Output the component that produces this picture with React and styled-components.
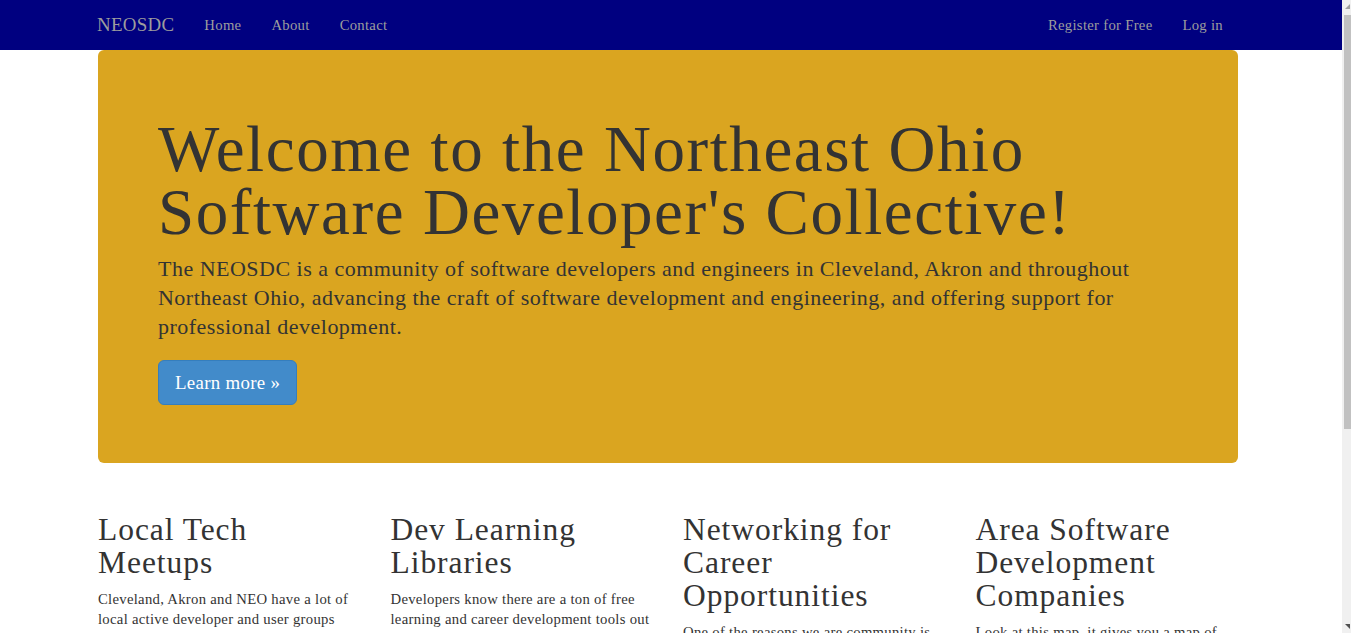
import React from "react";
import styled, { createGlobalStyle } from "styled-components";

const Global = createGlobalStyle`
  html, body { margin: 0; padding: 0; }
  body {
    font-family: "Palatino Linotype", "Book Antiqua", Palatino, "Liberation Serif", serif;
    font-size: 14.7px;
    letter-spacing: 0.02em;
    line-height: 20px;
    color: #333;
    background: #fff;
  }
  * { box-sizing: border-box; }
`;

const Container = styled.div`
  width: 1170px;
  margin: 0 auto;
  padding: 0 15px;
`;

const NavBar = styled.nav`
  background: #000080;
  height: 50px;
  padding-right: 15px;
`;

const Main = styled.main`
  padding-right: 15px;
`;

const NavInner = styled(Container)`
  display: flex;
  align-items: stretch;
  height: 50px;
`;

const Brand = styled.a`
  display: flex;
  align-items: center;
  font-size: 18.9px;
  color: #9d9d9d;
  text-decoration: none;
  margin-left: -1px;
  padding-right: 15px;
`;

const NavList = styled.ul`
  display: flex;
  list-style: none;
  margin: 0;
  padding: 0;
  margin-left: ${(p) => (p.$right ? "auto" : "0")};
`;

const NavLink = styled.a`
  display: flex;
  align-items: center;
  height: 50px;
  padding: 0 15px;
  color: #9d9d9d;
  text-decoration: none;
  font-size: 14.7px;
`;

const Jumbotron = styled.div`
  background: #daa520;
  border-radius: 6px;
  padding: 0 60px 58px;
  margin-bottom: 30px;
  overflow: hidden;
`;

const Title = styled.h1`
  font-size: 65px;
  line-height: 63px;
  font-weight: 400;
  letter-spacing: 0.024em;
  color: #333;
  margin: 68px 0 10px;
`;

const Lead = styled.p`
  font-size: 22px;
  line-height: 29px;
  letter-spacing: 0.022em;
  color: #333;
  margin: 0;
`;

const PrimaryButton = styled.a`
  display: inline-flex;
  align-items: center;
  height: 45px;
  margin-top: 19px;
  padding: 0 16px;
  font-size: 18.9px;
  color: #fff;
  background: #428bca;
  border: 1px solid #357ebd;
  border-radius: 6px;
  text-decoration: none;
`;

const Row = styled.div`
  display: grid;
  grid-template-columns: repeat(4, 1fr);
  margin: 0 -15px;
`;

const Col = styled.div`
  padding: 0 15px;
`;

const ColTitle = styled.h2`
  font-size: 31.5px;
  line-height: 33px;
  font-weight: 400;
  letter-spacing: 0.03em;
  color: #333;
  margin: 20px 0 10px;
`;

const ColText = styled.p`
  margin: 0 0 10px;
`;

const DefaultButton = styled.a`
  display: inline-block;
  padding: 6px 12px;
  border: 1px solid #ccc;
  border-radius: 4px;
  color: #333;
  text-decoration: none;
  background: #fff;
`;

const Footer = styled.footer`
  border-top: 1px solid #eee;
  margin-top: 30px;
  padding: 20px 0 40px;
`;

/* window scrollbar seen at the right edge of the screenshot */
const ScrollTrack = styled.div`
  position: fixed;
  top: 0;
  right: 0;
  width: 9px;
  height: 100vh;
  background: #f0f0f0;
  display: flex;
  flex-direction: column;
  align-items: flex-end;
`;

const ScrollArrow = styled.div`
  width: 0;
  height: 0;
  margin: ${(p) => (p.$down ? "auto 1px 4px 0" : "4px 1px 6px 0")};
  border-left: 5px solid transparent;
  ${(p) => (p.$down ? "border-top: 5px solid #505050;" : "border-bottom: 5px solid #a0a0a0;")}
`;

const ScrollThumb = styled.div`
  width: 7px;
  height: 414px;
  background: #c1c1c1;
`;

const cols = [
  {
    title: "Local Tech Meetups",
    text:
      "Cleveland, Akron and NEO have a lot of local active developer and user groups that meet regularly to share ideas, give talks and learn about new technologies. Find one near you.",
  },
  {
    title: "Dev Learning Libraries",
    text:
      "Developers know there are a ton of free learning and career development tools out there. We collect the best of them in one place so you can spend your time learning.",
  },
  {
    title: "Networking for Career Opportunities",
    text:
      "One of the reasons we are community is to help each other find great work with great people right here in Northeast Ohio.",
  },
  {
    title: "Area Software Development Companies",
    text:
      "Look at this map, it gives you a map of the software development companies located throughout the region.",
  },
];

export default function App() {
  return (
    <>
      <Global />
      <NavBar>
        <NavInner>
          <Brand href="#">NEOSDC</Brand>
          <NavList>
            <li><NavLink href="#">Home</NavLink></li>
            <li><NavLink href="#">About</NavLink></li>
            <li><NavLink href="#">Contact</NavLink></li>
          </NavList>
          <NavList $right>
            <li><NavLink href="#">Register for Free</NavLink></li>
            <li><NavLink href="#">Log in</NavLink></li>
          </NavList>
        </NavInner>
      </NavBar>
      <Main>
        <Container>
          <Jumbotron>
            <Title>Welcome to the Northeast Ohio Software Developer's Collective!</Title>
            <Lead>
              The NEOSDC is a community of software developers and engineers in Cleveland, Akron and
              throughout Northeast Ohio, advancing the craft of software development and engineering,
              and offering support for professional development.
            </Lead>
            <PrimaryButton href="#">Learn more »</PrimaryButton>
          </Jumbotron>
          <Row>
            {cols.map((c) => (
              <Col key={c.title}>
                <ColTitle>{c.title}</ColTitle>
                <ColText>{c.text}</ColText>
                <DefaultButton href="#">View details »</DefaultButton>
              </Col>
            ))}
          </Row>
          <Footer>© NEOSDC 2014</Footer>
        </Container>
      </Main>
      <ScrollTrack aria-hidden="true">
        <ScrollArrow />
        <ScrollThumb />
        <ScrollArrow $down />
      </ScrollTrack>
    </>
  );
}
